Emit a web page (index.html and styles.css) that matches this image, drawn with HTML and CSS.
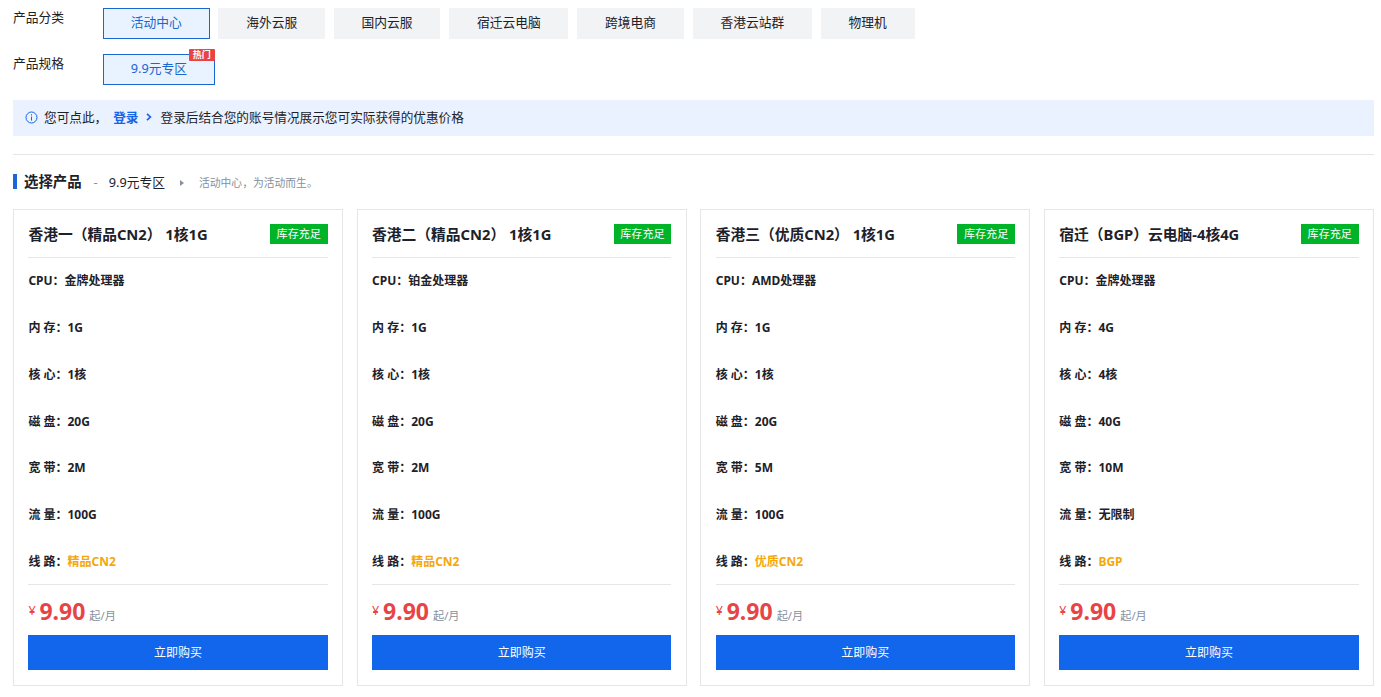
FILE: index.html
```html
<!DOCTYPE html>
<html lang="zh-CN">
<head>
    <meta charset="UTF-8">
    <title>活动中心</title>
    <link rel="stylesheet" href="styles.css">
</head>
<body>
    <div class="filter">
        <div class="filter-label">产品分类</div>
        <div class="tabs">
            <a class="tab active">活动中心</a>
            <a class="tab">海外云服</a>
            <a class="tab">国内云服</a>
            <a class="tab">宿迁云电脑</a>
            <a class="tab">跨境电商</a>
            <a class="tab">香港云站群</a>
            <a class="tab">物理机</a>
        </div>
    </div>
    <div class="filter">
        <div class="filter-label">产品规格</div>
        <div class="tabs">
            <a class="tab active">9.9元专区<span class="hot">热门</span></a>
        </div>
    </div>

    <div class="notice">
        <svg class="info" viewBox="0 0 13 13" fill="none" stroke="#1664e8">
            <circle cx="6.5" cy="6.5" r="5.5"/>
            <path d="M6.5 5.6v4M6.5 3.3v1.2"/>
        </svg>
        <span>您可点此，</span>
        <a class="login">登录</a>
        <svg class="arrow" viewBox="0 0 6 8" fill="none" stroke="#1664e8" stroke-width="1.7">
            <path d="M1 .8L4.4 4 1 7.2"/>
        </svg>
        <span>登录后结合您的账号情况展示您可实际获得的优惠价格</span>
    </div>

    <div class="section-title">
        <h2>选择产品</h2>
        <span class="dash">-</span>
        <span class="name">9.9元专区</span>
        <span class="caret"></span>
        <span class="desc">活动中心，为活动而生。</span>
    </div>

    <div class="cards">
        <div class="card">
            <div class="card-head">
                <h3>香港一（精品CN2） 1核1G</h3>
                <span class="stock">库存充足</span>
            </div>
            <ul class="specs">
                <li>CPU：金牌处理器</li>
                <li>内 存：1G</li>
                <li>核 心：1核</li>
                <li>磁 盘：20G</li>
                <li>宽 带：2M</li>
                <li>流 量：100G</li>
                <li>线 路：<span class="line">精品CN2</span></li>
            </ul>
            <div class="price"><i>¥</i><b>9.90</b><span>起/月</span></div>
            <a class="buy">立即购买</a>
        </div>
        <div class="card">
            <div class="card-head">
                <h3>香港二（精品CN2） 1核1G</h3>
                <span class="stock">库存充足</span>
            </div>
            <ul class="specs">
                <li>CPU：铂金处理器</li>
                <li>内 存：1G</li>
                <li>核 心：1核</li>
                <li>磁 盘：20G</li>
                <li>宽 带：2M</li>
                <li>流 量：100G</li>
                <li>线 路：<span class="line">精品CN2</span></li>
            </ul>
            <div class="price"><i>¥</i><b>9.90</b><span>起/月</span></div>
            <a class="buy">立即购买</a>
        </div>
        <div class="card">
            <div class="card-head">
                <h3>香港三（优质CN2） 1核1G</h3>
                <span class="stock">库存充足</span>
            </div>
            <ul class="specs">
                <li>CPU：AMD处理器</li>
                <li>内 存：1G</li>
                <li>核 心：1核</li>
                <li>磁 盘：20G</li>
                <li>宽 带：5M</li>
                <li>流 量：100G</li>
                <li>线 路：<span class="line">优质CN2</span></li>
            </ul>
            <div class="price"><i>¥</i><b>9.90</b><span>起/月</span></div>
            <a class="buy">立即购买</a>
        </div>
        <div class="card">
            <div class="card-head">
                <h3>宿迁（BGP）云电脑-4核4G</h3>
                <span class="stock">库存充足</span>
            </div>
            <ul class="specs">
                <li>CPU：金牌处理器</li>
                <li>内 存：4G</li>
                <li>核 心：4核</li>
                <li>磁 盘：40G</li>
                <li>宽 带：10M</li>
                <li>流 量：无限制</li>
                <li>线 路：<span class="line">BGP</span></li>
            </ul>
            <div class="price"><i>¥</i><b>9.90</b><span>起/月</span></div>
            <a class="buy">立即购买</a>
        </div>
    </div>
</body>
</html>
```
FILE: styles.css
```css
* {
    box-sizing: border-box;
}
body {
    margin: 0;
    padding: 8px 7px 0 13px;
    font-family: "Noto Sans", "Noto Sans CJK SC", sans-serif;
    font-size: 12.75px;
    color: #1d2129;
    background: #fff;
    white-space: nowrap;
}
h2, h3, ul {
    margin: 0;
    padding: 0;
}
.filter {
    display: flex;
    height: 31px;
    margin-bottom: 15px;
}
.filter-label {
    width: 90px;
    line-height: 18px;
}
.tabs {
    display: flex;
    gap: 8.9px;
}
.tab {
    position: relative;
    padding: 0 26.75px;
    border: 1px solid #f2f3f5;
    background: #f2f3f5;
    line-height: 27px;
}
.tab.active {
    border-color: #1b66d0;
    background: #e9f2ff;
    color: #1b66d0;
}
.hot {
    position: absolute;
    top: -6px;
    right: -1px;
    width: 26px;
    height: 12px;
    border-radius: 1px;
    background: #e84446;
    color: #fff;
    font-size: 9px;
    font-weight: bold;
    line-height: 12px;
    text-align: center;
}
.notice {
    display: flex;
    align-items: center;
    height: 36px;
    padding: 0 12px 3px;
    background: #eaf2ff;
    font-size: 12.65px;
}
.info {
    width: 13px;
    height: 13px;
    margin: 2px 6px 0 0;
}
.login {
    margin-left: 6px;
    color: #1664e8;
    font-weight: bold;
}
.arrow {
    width: 6px;
    height: 8px;
    margin: 1px 9px 0 7px;
}
.section-title {
    display: flex;
    align-items: center;
    height: 55px;
    margin-top: 18px;
    padding-bottom: 1px;
    border-top: 1px solid #e5e6e8;
}
.section-title h2 {
    padding-left: 7px;
    border-left: 4px solid #1b66d8;
    font-size: 14.4px;
    line-height: 15px;
}
.dash {
    margin: 0 11px 0 12px;
    color: #86909c;
}
.caret {
    margin: 3px 15px 0 15px;
    border: 3px solid transparent;
    border-left: 4px solid #86909c;
    border-right: 0;
}
.desc {
    margin-top: 1px;
    color: #86909c;
    font-size: 10.8px;
}
.cards {
    display: grid;
    grid-template-columns: repeat(4, 1fr);
    gap: 13.6px;
}
.card {
    height: 477px;
    padding: 0 14.4px;
    border: 1px solid #e5e6e8;
}
.card-head {
    display: flex;
    align-items: center;
    justify-content: space-between;
    height: 48px;
    border-bottom: 1px solid #e5e6e8;
}
.card-head h3 {
    font-size: 14.75px;
    line-height: 20px;
}
.stock {
    height: 20px;
    margin-top: 1px;
    padding: 0 6.7px;
    background: #00b42a;
    color: #fff;
    font-size: 11.1px;
    line-height: 20px;
}
.specs {
    height: 327px;
    border-bottom: 1px solid #e5e6e8;
    list-style: none;
    font-size: 12px;
    font-weight: bold;
}
.specs li {
    height: 46.85px;
    line-height: 45px;
}
.line {
    color: #f5a70c;
}
.price {
    display: flex;
    align-items: baseline;
    height: 50px;
    color: #e84446;
    line-height: 52px;
}
.price i {
    width: 11px;
    font-size: 12.5px;
    font-style: normal;
    position: relative;
    top: -5px;
}
.price b {
    font-size: 23px;
}
.price span {
    margin-left: 4px;
    color: #86909c;
    font-size: 11.2px;
}
.buy {
    display: block;
    height: 35px;
    background: #1266ec;
    color: #fff;
    font-size: 12px;
    line-height: 35px;
    text-align: center;
}
```
